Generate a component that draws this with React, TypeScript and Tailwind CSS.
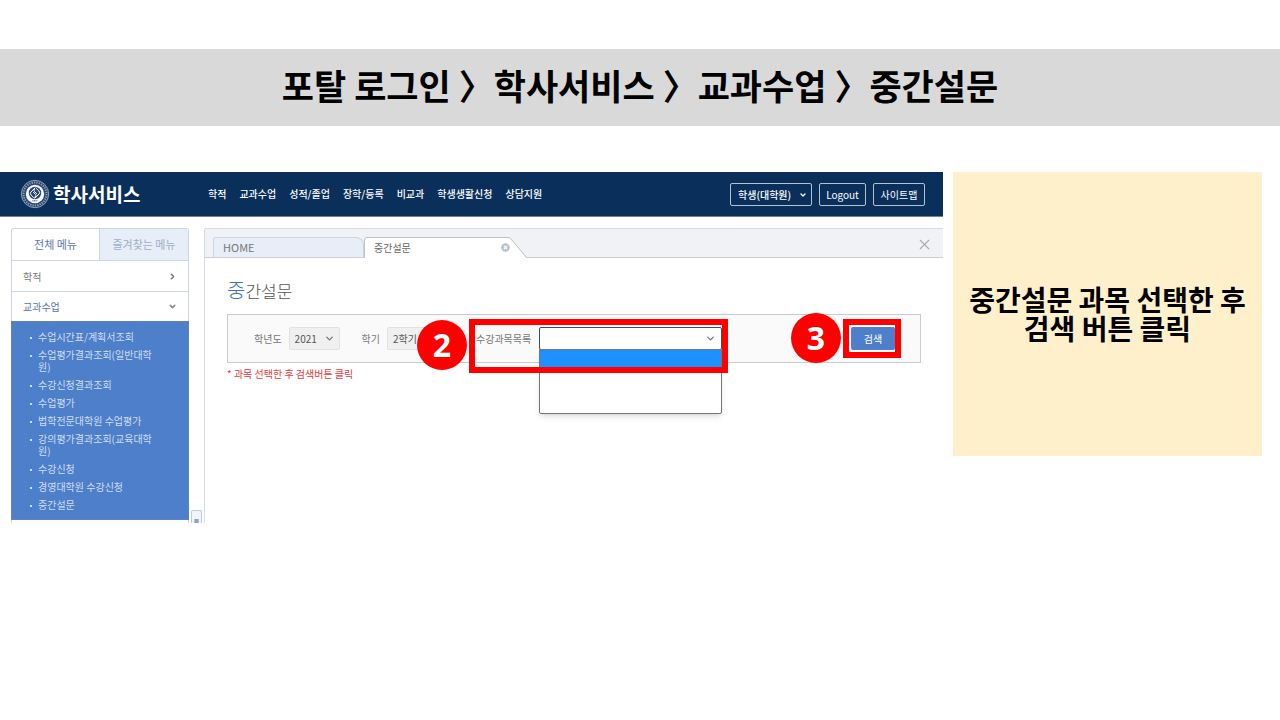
import React from "react";
import { ChevronDown, ChevronRight, X } from "lucide-react";

const topMenu = ["학적", "교과수업", "성적/졸업", "장학/등록", "비교과", "학생생활신청", "상담지원"];

const subMenu = [
  "수업시간표/계획서조회",
  "수업평가결과조회(일반대학원)",
  "수강신청결과조회",
  "수업평가",
  "법학전문대학원 수업평가",
  "강의평가결과조회(교육대학원)",
  "수강신청",
  "경영대학원 수강신청",
  "중간설문",
];

function Emblem() {
  return (
    <svg viewBox="0 0 30 30" className="size-[30px] shrink-0" aria-hidden="true">
      <circle cx="15" cy="15" r="13.7" fill="#29466f" stroke="#a9b7ca" strokeWidth="0.8" />
      <circle cx="15" cy="15" r="11.5" fill="none" stroke="#8d9fb9" strokeWidth="2" strokeDasharray="1.3 1.1" />
      <circle cx="15" cy="15" r="9.2" fill="#f4f7fa" />
      <circle cx="15" cy="14" r="6.2" fill="#274571" />
      <path
        d="m15.500 8.500-4.700 4.600q-1.200 1.500.4 3l2.600 2.600M13.200 13.200l2.300 2.200q1 1.200-.2 2.400l-1 1M14.500 19.500l4.700-4.600q1.200-1.500-.4-3l-2.600-2.600M16.800 14.800l-2.300-2.200q-1-1.200.2-2.400"
        fill="none"
        stroke="#fff"
        strokeWidth="1"
      />
      <path d="M12.500 21.800h5" stroke="#274571" strokeWidth="1" strokeDasharray="1 .6" />
    </svg>
  );
}

function Badge({ children, className }: { children: React.ReactNode; className: string }) {
  return (
    <span
      className={
        "absolute z-20 flex size-[50px] items-center justify-center rounded-full bg-[#ff0000] font-['Open_Sans','Noto_Sans_CJK_KR',sans-serif] text-[32px] font-bold text-white " +
        className
      }
    >
      {children}
    </span>
  );
}

function Header() {
  return (
    <header className="flex h-[45px] items-center border-b border-[#6f819c] bg-[#0b2f5b] pr-[18px] pl-5 text-white">
      <a href="#home" className="flex w-[188px] items-center gap-[3px]">
        <Emblem />
        <span className="text-[19px] leading-6 font-bold">학사서비스</span>
      </a>
      <nav className="flex grow gap-[13px] text-[10px] leading-4 font-medium">
        {topMenu.map((item) => (
          <a key={item} href="#menu">
            {item}
          </a>
        ))}
      </nav>
      <div className="flex gap-[7px] text-[10px]">
        <div className="relative">
          <select
            aria-label="사용자 구분"
            className="block h-[23px] w-[82px] appearance-none rounded-[2px] border border-[#b6c1d0] bg-transparent pl-[7px] text-[10px] font-medium"
          >
            <option>학생(대학원)</option>
          </select>
          <ChevronDown className="pointer-events-none absolute top-2 right-[5px] size-2" strokeWidth={4} />
        </div>
        <button type="button" className="h-[23px] w-[47px] rounded-[2px] border border-[#b6c1d0]">
          Logout
        </button>
        <button type="button" className="h-[23px] w-[52px] rounded-[2px] border border-[#b6c1d0]">
          사이트맵
        </button>
      </div>
    </header>
  );
}

function Sidebar() {
  return (
    <aside className="w-[178px] shrink-0 rounded-t-[3px] border-x border-t border-[#ced6e2] text-[10px]">
      <div className="flex h-[31px] text-[11px]">
        <button type="button" className="w-[87px] text-[#5a76ae]">
          전체 메뉴
        </button>
        <button type="button" className="grow border-l border-[#ced6e2] bg-[#e8eef8] text-[#9dadcb]">
          즐겨찾는 메뉴
        </button>
      </div>
      <a href="#record" className="flex h-[31px] items-center justify-between border-t border-[#ced6e2] px-[11px] text-[#777]">
        학적
        <ChevronRight className="size-[9px]" strokeWidth={4} />
      </a>
      <a href="#class" className="flex h-[30px] items-center justify-between border-t border-[#ced6e2] px-[11px] text-[#5276b5]">
        교과수업
        <ChevronDown className="size-[9px] text-[#888]" strokeWidth={4} />
      </a>
      <ul className="-mx-px flex flex-col gap-[6px] border border-[#5f82b8] bg-[#4e7fcb] pt-[9px] pr-[26px] pb-2 pl-[18px] text-[#d0def3]">
        {subMenu.map((item) => (
          <li key={item} className="flex gap-[6px] leading-[12px] break-all">
            <span className="mt-[6px] size-[2px] shrink-0 bg-[#d0def3]" />
            <a href="#sub">{item}</a>
          </li>
        ))}
      </ul>
      <div className="h-[3px]" />
    </aside>
  );
}

function Tabs() {
  return (
    <div className="relative flex h-[30px] items-end border-t border-[#d5dbe5] bg-[#f0f2f6] pl-2 text-[10px] text-[#777]">
      <span className="absolute inset-x-0 bottom-0 h-px bg-[#cfd0d3]" />
      <a
        href="#home"
        className="relative flex h-[21px] w-[151px] items-center rounded-tl-[2px] rounded-tr-[8px] border border-[#cfd5df] border-b-[#cfd0d3] bg-[#e8eef8] pl-[9px] text-[11px]"
      >
        HOME
      </a>
      <div className="relative flex h-[21px] w-[163px] items-center justify-between pr-[17px] pl-[10px] text-[#666]">
        <svg className="absolute inset-0 size-full" viewBox="0 0 163 21" preserveAspectRatio="none" aria-hidden="true">
          <path d="M.5 21V3Q.5.5 3 .5h141q2 0 3 1.500L162.500 21Z" fill="#fff" />
          <path d="M.5 21V3Q.5.5 3 .5h141q2 0 3 1.500L162.500 20.500" fill="none" stroke="#bfc1c4" />
        </svg>
        <span className="relative">중간설문</span>
        <button type="button" aria-label="탭 닫기" className="relative">
          <svg viewBox="0 0 9 9" className="size-[9px]" aria-hidden="true">
            <circle cx="4.500" cy="4.500" r="4.300" fill="#b9c2d3" />
            <path d="m3 3 3 3m0-3L3 6" stroke="#fff" strokeWidth="1.200" />
          </svg>
        </button>
      </div>
      <button type="button" aria-label="모두 닫기" className="absolute top-[7px] right-[10px] text-[#aaa]">
        <X className="size-[17px]" strokeWidth={1.5} />
      </button>
    </div>
  );
}

function SearchForm() {
  return (
    <form className="relative mt-[9px] flex h-[49px] items-center border border-[#cbcbcb] bg-[#fafafa] pr-[25px] pl-[26px] text-[10px] text-[#777]">
      <label htmlFor="year">학년도</label>
      <div className="relative ml-[7px]">
        <select id="year" className="block h-[23px] w-[51px] appearance-none rounded-[2px] border border-[#e2e2e2] bg-[#f0f0f0] pl-[5px] text-[10px] text-[#555]">
          <option>2021</option>
        </select>
        <ChevronDown className="pointer-events-none absolute top-[6px] right-[5px] size-[11px]" strokeWidth={3} />
      </div>
      <label htmlFor="term" className="ml-[22px]">
        학기
      </label>
      <select id="term" className="ml-[7px] h-[23px] w-[60px] appearance-none rounded-[2px] border border-[#e2e2e2] bg-[#f0f0f0] pl-[5px] text-[10px] text-[#555]">
        <option>2학기</option>
      </select>
      <label htmlFor="course" className="ml-[29px] w-[63px]">
        수강과목목록
      </label>
      <div className="relative">
        <select id="course" className="block h-[23px] w-[183px] appearance-none rounded-[2px] border border-[#34506e] bg-white" />
        <ChevronDown className="pointer-events-none absolute top-[6px] right-[6px] size-[11px]" strokeWidth={3} />
        <div className="absolute top-[22px] left-0 h-[65px] w-full rounded-b-[2px] border border-[#777] bg-white shadow-md">
          <div className="h-[17px] bg-[#1e90ff]" />
        </div>
        <div className="pointer-events-none absolute -top-[8px] -left-[70px] z-10 h-[54px] w-[259px] border-[6px] border-[#ff0000]" />
        <Badge className="-top-[7px] -left-[122px]">2</Badge>
      </div>
      <div className="relative ml-auto">
        <button type="submit" className="block h-[23px] w-[44px] rounded-[2px] bg-[#4e7fcb] text-[10px] text-white ring-2 ring-white">
          검색
        </button>
        <div className="pointer-events-none absolute -top-[8px] -left-[8px] h-[39px] w-[58px] border-[6px] border-[#ff0000]" />
        <Badge className="-top-[14px] -left-[60px]">3</Badge>
      </div>
    </form>
  );
}

export default function App() {
  return (
    <main className="min-h-screen bg-white pt-[49px] font-['Noto_Sans_CJK_KR',sans-serif]">
      <h1 className="flex h-[77px] items-center justify-center bg-[#d9d9d9] pb-1 text-[35px] font-bold text-black">
        포탈 로그인 〉학사서비스 〉교과수업 〉중간설문
      </h1>
      <div className="mt-[46px] flex items-start gap-[10px] pr-[18px]">
        <section className="min-w-0 grow">
          <Header />
          <div className="flex pt-[11px] pl-[11px]">
            <Sidebar />
            <div className="flex w-[15px] shrink-0 items-end pl-[2px]">
              <div className="flex h-[13px] w-[11px] items-end justify-center rounded-t-[2px] border-x border-t border-[#bfcbd9] bg-[#f1f4f8]">
                <span className="h-1 w-[5px] border-x border-[#b5bdc8] bg-[#98a3b1]" />
              </div>
            </div>
            <div className="min-w-0 grow rounded-tl-[3px] border-l border-[#d5dbe5]">
              <Tabs />
              <div className="pt-[18px] pr-[22px] pl-[22px]">
                <h2 className="text-[17px] leading-7 font-light text-[#555] first-letter:text-[20px] first-letter:text-[#3d6fbd]">
                  중간설문
                </h2>
                <SearchForm />
                <p className="mt-[3px] text-[10px] leading-4 text-[#e83a3a]">* 과목 선택한 후 검색버튼 클릭</p>
              </div>
            </div>
          </div>
        </section>
        <aside className="flex h-[284px] w-[309px] shrink-0 items-center justify-center bg-[#fff0cc] text-center text-[28px] leading-[29px] font-bold text-black">
          <p>
            중간설문 과목 선택한 후
            <br />
            검색 버튼 클릭
          </p>
        </aside>
      </div>
    </main>
  );
}
